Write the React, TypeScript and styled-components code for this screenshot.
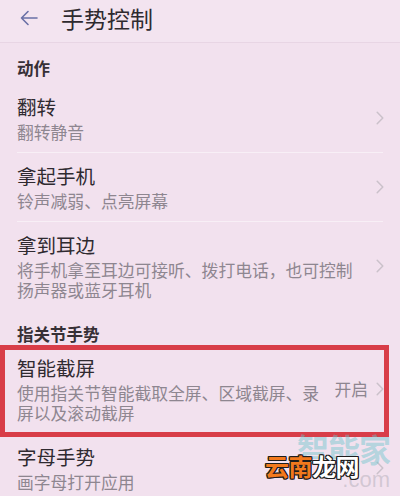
import React from "react";
import styled, { createGlobalStyle } from "styled-components";

const Global = createGlobalStyle`
  html, body { margin: 0; padding: 0; background: #f2e1ee; }
  body { font-family: "Noto Sans CJK SC", "Noto Sans", sans-serif; }
`;

const Page = styled.div`
  position: relative;
  width: 400px;
  height: 496px;
  overflow: hidden;
  background: #f2e1ee;
  color: #2f2a30;
`;

const Header = styled.header`
  height: 43px;
  box-sizing: border-box;
  display: flex;
  align-items: center;
  gap: 23px;
  padding: 0 0 7px 20px;
  background: #f3e4f0;
  border-bottom: 1px solid #e8d5e4;
`;

const Title = styled.h1`
  margin: 0;
  font-size: 23px;
  font-weight: 400;
  line-height: 30px;
  color: #2e2a2f;
`;

const SectionTitle = styled.div<{ $top: number; $bottom: number }>`
  padding: ${(p) => p.$top}px 17px ${(p) => p.$bottom}px;
  font-size: 16.5px;
  line-height: 22px;
  font-weight: 700;
  color: #373036;
`;

const Row = styled.div`
  display: flex;
  align-items: center;
  gap: 10px;
  padding: 10px 16px 10px 17px;
`;

const TextBlock = styled.div`
  flex: 1;
  min-width: 0;
`;

const ItemTitle = styled.div`
  font-size: 19.5px;
  line-height: 26px;
  color: #2f2a30;
`;

const ItemSub = styled.div`
  margin-top: 2px;
  font-size: 16.8px;
  line-height: 20px;
  color: #8e8690;
`;

const Trail = styled.div`
  display: flex;
  align-items: center;
  gap: 8px;
`;

const Value = styled.span`
  font-size: 16.8px;
  line-height: 20px;
  color: #8e8690;
`;

const Divider = styled.div`
  height: 1px;
  margin: 0 17px;
  background: #f8eff6;
`;

const Highlight = styled.div`
  position: absolute;
  left: 0;
  top: 345px;
  width: 389px;
  height: 92px;
  box-sizing: border-box;
  border: 5px solid #d83d48;
  pointer-events: none;
`;

const Watermark = styled.div`
  position: absolute;
  right: 10px;
  top: 428px;
  width: 124px;
  height: 66px;
  pointer-events: none;
`;

const WmBrand = styled.div`
  position: absolute;
  right: 0;
  top: 0;
  font-size: 32px;
  line-height: 40px;
  font-weight: 700;
  letter-spacing: -1px;
  color: rgba(105, 196, 202, 0.45);
`;

const WmDomain = styled.div`
  position: absolute;
  right: 0;
  top: 40px;
  font-family: "Liberation Sans", sans-serif;
  font-size: 22px;
  line-height: 24px;
  color: rgba(150, 150, 160, 0.35);
`;

const WmSite = styled.div`
  position: absolute;
  left: -1px;
  top: 24px;
  font-size: 24px;
  line-height: 28px;
  font-weight: 700;
  letter-spacing: -0.5px;
  text-shadow: -1px -1px 0 #1d1d1d, 1px -1px 0 #1d1d1d, -1px 1px 0 #1d1d1d,
    1px 1px 0 #1d1d1d, 0 1px 0 #1d1d1d, 0 -1px 0 #1d1d1d, 1px 0 0 #1d1d1d,
    -1px 0 0 #1d1d1d;
`;

const WmPart = styled.span<{ $tone: "orange" | "white" }>`
  color: ${(p) => (p.$tone === "orange" ? "#f2791d" : "#ffffff")};
`;

const BackArrow = () => (
  <svg width="18" height="16" viewBox="0 0 18 16" fill="none">
    <path
      d="M17 8H1.5M8 1.5L1.5 8L8 14.5"
      stroke="#6a70a6"
      strokeWidth="1.6"
      strokeLinecap="round"
      strokeLinejoin="round"
    />
  </svg>
);

const Chevron = () => (
  <svg width="8" height="14" viewBox="0 0 8 14" fill="none">
    <path
      d="M1.2 1.2L6.8 7L1.2 12.8"
      stroke="#cbc1ca"
      strokeWidth="1.5"
      strokeLinecap="round"
      strokeLinejoin="round"
    />
  </svg>
);

type ItemProps = { title: string; sub: string; value?: string };

const Item = ({ title, sub, value }: ItemProps) => (
  <Row>
    <TextBlock>
      <ItemTitle>{title}</ItemTitle>
      <ItemSub>{sub}</ItemSub>
    </TextBlock>
    <Trail>
      {value && <Value>{value}</Value>}
      <Chevron />
    </Trail>
  </Row>
);

export default function App() {
  return (
    <Page>
      <Global />
      <Header>
        <BackArrow />
        <Title>手势控制</Title>
      </Header>

      <SectionTitle $top={14} $bottom={5}>动作</SectionTitle>
      <Item title="翻转" sub="翻转静音" />
      <Divider />
      <Item title="拿起手机" sub="铃声减弱、点亮屏幕" />
      <Divider />
      <Item
        title="拿到耳边"
        sub="将手机拿至耳边可接听、拨打电话，也可控制扬声器或蓝牙耳机"
      />

      <SectionTitle $top={13} $bottom={0}>指关节手势</SectionTitle>
      <Item
        title="智能截屏"
        sub="使用指关节智能截取全屏、区域截屏、录屏以及滚动截屏"
        value="开启"
      />
      <Divider />
      <Item title="字母手势" sub="画字母打开应用" />

      <Highlight />

      <Watermark>
        <WmBrand>智能家</WmBrand>
        <WmDomain>.com</WmDomain>
        <WmSite>
          <WmPart $tone="orange">云南</WmPart>
          <WmPart $tone="white">龙网</WmPart>
        </WmSite>
      </Watermark>
    </Page>
  );
}
